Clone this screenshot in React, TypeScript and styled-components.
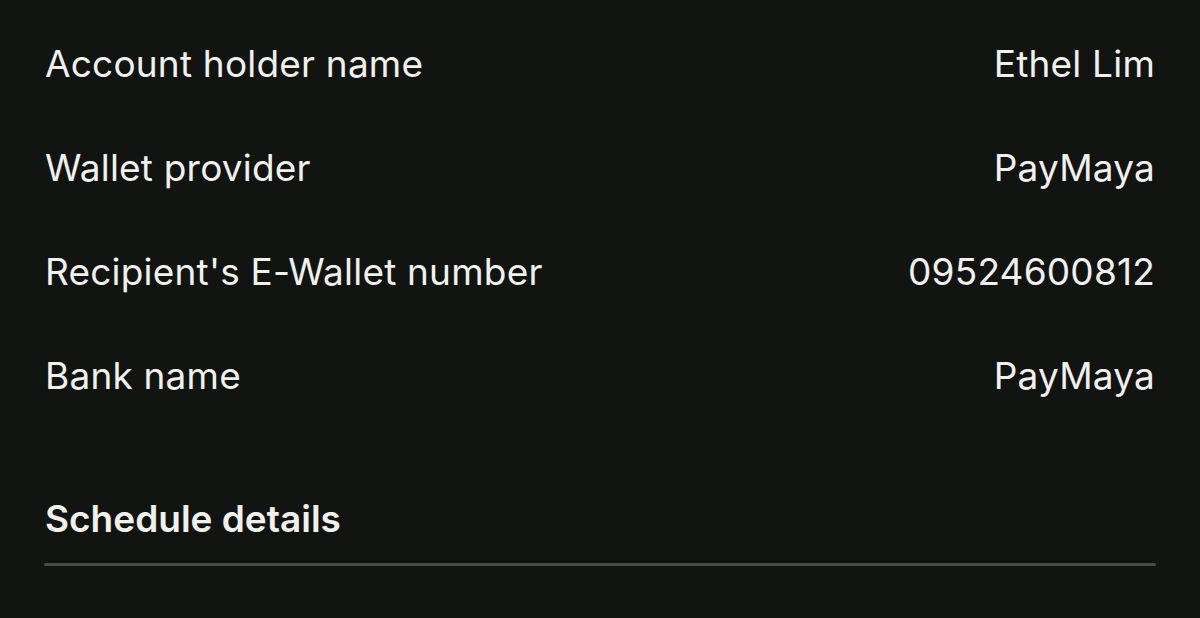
import styled, { createGlobalStyle } from "styled-components";

const GlobalStyle = createGlobalStyle`
    html, body {
        margin: 0;
        padding: 0;
        background: #121412;
    }
    body {
        font-family: Inter, "Noto Sans", sans-serif;
    }
`;

const Page = styled.div`
    width: 1200px;
    height: 618px;
    box-sizing: border-box;
    padding: 12px 45px 0 45px;
    background: #121412;
    color: #f0f1ec;
    overflow: hidden;
`;

const DetailRow = styled.div`
    display: flex;
    justify-content: space-between;
    align-items: center;
    height: 104px;
    font-size: 37px;
    line-height: 104px;
    letter-spacing: 0.2px;
`;

const Label = styled.span`
    font-weight: 400;
`;

const Value = styled.span`
    font-weight: 400;
    text-align: right;
`;

const SectionTitle = styled.h2`
    margin: 68px 0 0 0;
    font-size: 37px;
    line-height: 45px;
    font-weight: 600;
`;

const Divider = styled.div`
    margin-top: 22px;
    height: 3px;
    width: 1112px;
    margin-left: -1px;
    background: #4a4b49;
    border-radius: 2px;
`;

const details = [
    { label: "Account holder name", value: "Ethel Lim" },
    { label: "Wallet provider", value: "PayMaya" },
    { label: "Recipient's E-Wallet number", value: "09524600812" },
    { label: "Bank name", value: "PayMaya" },
];

const App = () => {
    return (
        <>
            <GlobalStyle />
            <Page>
                {details.map((d) => (
                    <DetailRow key={d.label}>
                        <Label>{d.label}</Label>
                        <Value>{d.value}</Value>
                    </DetailRow>
                ))}
                <SectionTitle>Schedule details</SectionTitle>
                <Divider />
            </Page>
        </>
    );
};

export default App;
